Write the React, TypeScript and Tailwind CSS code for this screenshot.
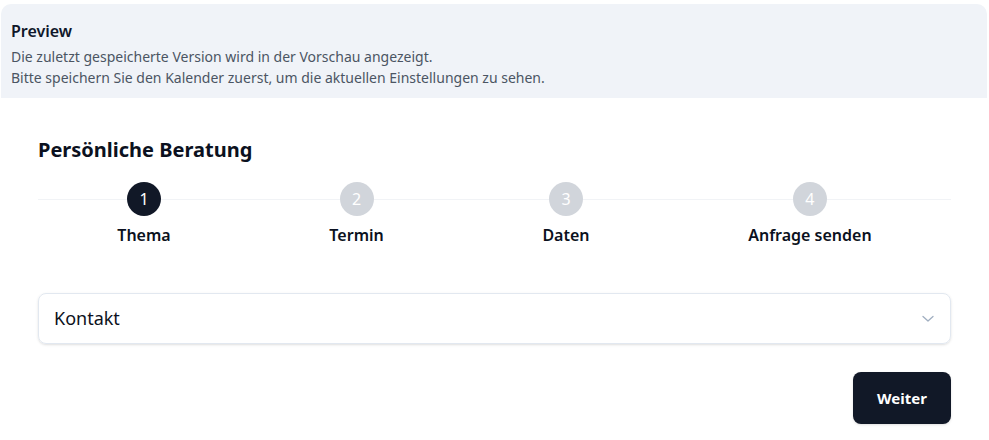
import React from "react";

const steps = ["Thema", "Termin", "Daten", "Anfrage senden"];

export default function App() {
  return (
    <div className="w-[989px] h-[440px] bg-white overflow-hidden" style={{ fontFamily: '"Noto Sans", "Open Sans", sans-serif' }}>
      <div className="mt-[4px] mx-[1px] mr-[2px] rounded-t-[10px] bg-[#f0f3f8] pl-[10px] pt-[15px] pb-[10px]">
        <div className="text-[16px] leading-[24px] font-semibold text-[#0f172a]">Preview</div>
        <div className="mt-[3px] text-[14px] leading-[21px] text-[#4b5563]">
          <div>Die zuletzt gespeicherte Version wird in der Vorschau angezeigt.</div>
          <div>Bitte speichern Sie den Kalender zuerst, um die aktuellen Einstellungen zu sehen.</div>
        </div>
      </div>
      <div className="px-[38px] pt-[38px]">
        <h2 className="text-[20px] leading-[28px] font-bold text-[#0b1120]">Persönliche Beratung</h2>
        <div className="relative mt-[18px]">
          <div className="absolute left-0 right-0 top-[17px] h-px bg-[#f1f3f6]" />
          <div className="relative flex justify-around">
            {steps.map((s, i) => (
              <div key={s} className="flex flex-col items-center">
                <div
                  className={
                    i === 0
                      ? "w-[34px] h-[34px] rounded-full bg-[#111827] text-white flex items-center justify-center text-[16px]"
                      : "w-[34px] h-[34px] rounded-full bg-[#d1d5db] text-white flex items-center justify-center text-[16px]"
                  }
                >
                  {i + 1}
                </div>
                <div className="mt-[7px] text-[16px] leading-[24px] font-semibold text-[#0b1120] whitespace-nowrap">{s}</div>
              </div>
            ))}
          </div>
        </div>
        <div className="mt-[46px] h-[51px] rounded-[8px] border border-[#e2e8f0] shadow-sm flex items-center justify-between pl-[15px] pr-[16px]">
          <span className="text-[18px] text-[#0b1120]">Kontakt</span>
          <svg width="12" height="8" viewBox="0 0 12 8" fill="none">
            <path d="M1 1.5 L6 6 L11 1.5" stroke="#a0aec0" strokeWidth="1.3" strokeLinecap="round" strokeLinejoin="round" />
          </svg>
        </div>
        <div className="mt-[28px] flex justify-end">
          <button className="w-[98px] h-[52px] rounded-[8px] bg-[#111827] text-white text-[15px] font-bold shadow-sm">Weiter</button>
        </div>
      </div>
    </div>
  );
}
